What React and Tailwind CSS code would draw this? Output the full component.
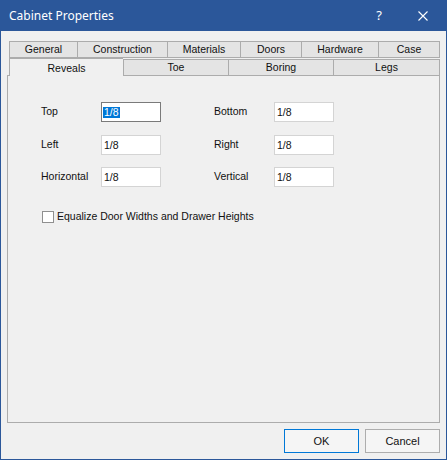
import React from "react";

const row1 = [
  { label: "General", w: "w-[68px]" },
  { label: "Construction", w: "w-[90px]" },
  { label: "Materials", w: "w-[73px]" },
  { label: "Doors", w: "w-[61px]" },
  { label: "Hardware", w: "w-[77px]" },
  { label: "Case", w: "w-[62px]", last: true },
];

function TextBox({ value, focused }) {
  if (focused) {
    return (
      <div className="w-[60px] h-[20px] bg-white border border-[#7A7A7A] flex items-center pl-px">
        <span className="bg-[#0078D7] text-white px-px leading-[11px]">{value}</span>
      </div>
    );
  }
  return (
    <div className="w-[60px] h-[20px] bg-white border border-[#D4D4D4] flex items-center pl-[2px]">
      <span className="leading-[11px]">{value}</span>
    </div>
  );
}

function Row({ l1, l2, focused, className }) {
  return (
    <div className={"flex items-center h-[20px] " + (className || "")}>
      <div className="w-[60px]">{l1}</div>
      <TextBox value="1/8" focused={focused} />
      <div className="w-[53px]" />
      <div className="w-[60px]">{l2}</div>
      <TextBox value="1/8" />
    </div>
  );
}

export default function App() {
  return (
    <div className="w-[447px] h-[460px] flex flex-col bg-[#F0F0F0] border-x border-b border-[#2B579A] font-['Liberation_Sans',Arial,sans-serif] text-[10.5px] text-[#111]">
      {/* Title bar */}
      <div className="h-[31px] shrink-0 bg-[#2B579A] flex items-center text-white">
        <div className="pl-2 flex-1 font-['Noto_Sans',sans-serif] text-[12px]">Cabinet Properties</div>
        <div className="w-[14px] text-center font-['Noto_Sans',sans-serif] text-[13px] mr-[32px]">?</div>
        <div className="w-[10px] h-[10px] mr-[18px]">
          <svg width="10" height="10" viewBox="0 0 10 10">
            <path d="M0.5 0.5 L9.5 9.5 M9.5 0.5 L0.5 9.5" stroke="white" strokeWidth="1.1" fill="none" />
          </svg>
        </div>
      </div>

      {/* Body */}
      <div className="flex-1 flex flex-col px-[6px] pt-[10px]">
        {/* Tabs */}
        <div className="ml-[2px] flex flex-col">
          <div className="flex h-[17px]">
            {row1.map((t) => (
              <div
                key={t.label}
                className={
                  t.w +
                  " h-[17px] bg-[#E4E4E4] border-t border-b border-l border-[#ACACAC] flex items-center justify-center " +
                  (t.last ? "border-r" : "")
                }
              >
                {t.label}
              </div>
            ))}
          </div>
          <div className="flex h-[17px]">
            <div className="w-[114px] h-[18px] -mb-px relative z-10 bg-[#F0F0F0] border-t border-l border-[#ACACAC] flex items-center justify-center pt-[2px]">
              Reveals
            </div>
            <div className="w-[105px] h-[16px] mt-px bg-[#E4E4E4] border-t border-l border-[#ACACAC] flex items-center justify-center">
              Toe
            </div>
            <div className="w-[105px] h-[16px] mt-px bg-[#E4E4E4] border-t border-l border-[#ACACAC] flex items-center justify-center">
              Boring
            </div>
            <div className="w-[107px] h-[16px] mt-px bg-[#E4E4E4] border-t border-l border-r border-[#ACACAC] flex items-center justify-center">
              Legs
            </div>
          </div>
        </div>

        {/* Panel */}
        <div className="h-[348px] border border-[#ACACAC] bg-[#F0F0F0] pl-[33px] pt-[26px] flex flex-col">
          <Row l1="Top" l2="Bottom" focused />
          <Row l1="Left" l2="Right" className="mt-[13px]" />
          <Row l1="Horizontal" l2="Vertical" className="mt-[12px]" />
          <div className="flex items-center mt-[22px] ml-px">
            <div className="w-[12px] h-[12px] bg-white border border-[#8F8F8F]" />
            <span className="ml-[3px]">Equalize Door Widths and Drawer Heights</span>
          </div>
        </div>

        {/* Buttons */}
        <div className="flex justify-end gap-[6px] mt-[6px]">
          <button className="w-[75px] h-[24px] bg-[#F5F5F5] border border-[#0078D7] text-[11px]">OK</button>
          <button className="w-[75px] h-[24px] bg-[#F5F5F5] border border-[#ADADAD] text-[11px]">Cancel</button>
        </div>
      </div>
    </div>
  );
}
